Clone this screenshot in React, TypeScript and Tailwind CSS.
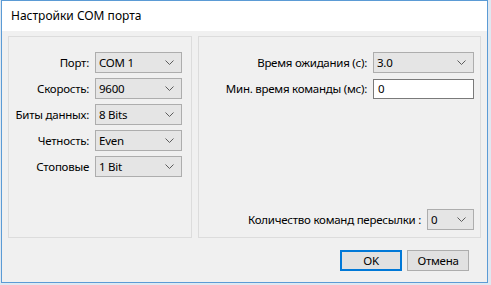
import React from "react";

function Chevron() {
  return (
    <svg width="9" height="5" viewBox="0 0 9 5" className="shrink-0">
      <path d="M0.5 0.5 L4.5 4.5 L8.5 0.5" fill="none" stroke="#5c5c5c" strokeWidth="1" />
    </svg>
  );
}

function Combo({ value, width }: { value: string; width: string }) {
  return (
    <div
      className={`${width} h-[21px] border border-[#adadad] bg-[#e5e5e5] flex items-center justify-between pl-[3px] pr-[7px]`}
    >
      <span>{value}</span>
      <Chevron />
    </div>
  );
}

function Row({ label, value }: { label: string; value: string }) {
  return (
    <div className="flex items-center h-[21px]">
      <div className="w-[86px] text-right pr-[6px] whitespace-nowrap">{label}</div>
      <Combo value={value} width="w-[87px]" />
    </div>
  );
}

export default function App() {
  return (
    <div
      className="w-[491px] h-[285px] bg-[#dfe8f1] overflow-hidden text-[11.5px] tracking-[-0.25px] text-black"
      style={{ fontFamily: '"Noto Sans", "Open Sans", sans-serif' }}
    >
      <div className="ml-[1px] w-[487px] h-[283px] border border-[#5b9bd5] flex flex-col">
        {/* заголовок окна */}
        <div className="h-[30px] bg-white flex items-center pl-[9px] text-[12px] tracking-normal">
          Настройки COM порта
        </div>

        <div className="flex-1 bg-[#f0f0f0] pt-[5px] px-[6px] flex flex-col">
          <div className="flex gap-[6px] h-[202px]">
            {/* параметры порта */}
            <div className="w-[184px] border border-[#dcdcdc] pt-[15px] flex flex-col gap-[5px]">
              <Row label="Порт:" value="COM 1" />
              <Row label="Скорость:" value="9600" />
              <Row label="Биты данных:" value="8 Bits" />
              <Row label="Четность:" value="Even" />
              <Row label="Стоповые" value="1 Bit" />
            </div>

            {/* таймауты */}
            <div className="flex-1 border border-[#dcdcdc] pt-[15px] pr-[6px] flex flex-col">
              <div className="flex items-center justify-end h-[21px]">
                <span className="pr-[6px]">Время ожидания (с):</span>
                <Combo value="3.0" width="w-[101px]" />
              </div>
              <div className="flex items-center justify-end h-[21px] mt-[5px]">
                <span className="pr-[6px]">Мин. время команды (мс):</span>
                <div className="w-[101px] h-[20px] border border-[#7a7a7a] bg-white flex items-center pl-[4px]">
                  0
                </div>
              </div>
              <div className="flex items-center justify-end h-[21px] mt-auto mb-[7px]">
                <span className="pr-[6px]">Количество команд пересылки :</span>
                <Combo value="0" width="w-[47px]" />
              </div>
            </div>
          </div>

          {/* кнопки */}
          <div className="flex justify-end gap-[5px] mt-[12px] pr-[12px]">
            <button className="w-[62px] h-[21px] border-2 border-[#0078d7] bg-[#e1e1e1] flex items-center justify-center">
              OK
            </button>
            <button className="w-[62px] h-[21px] border border-[#adadad] bg-[#e1e1e1] flex items-center justify-center">
              Отмена
            </button>
          </div>
        </div>
      </div>
    </div>
  );
}
